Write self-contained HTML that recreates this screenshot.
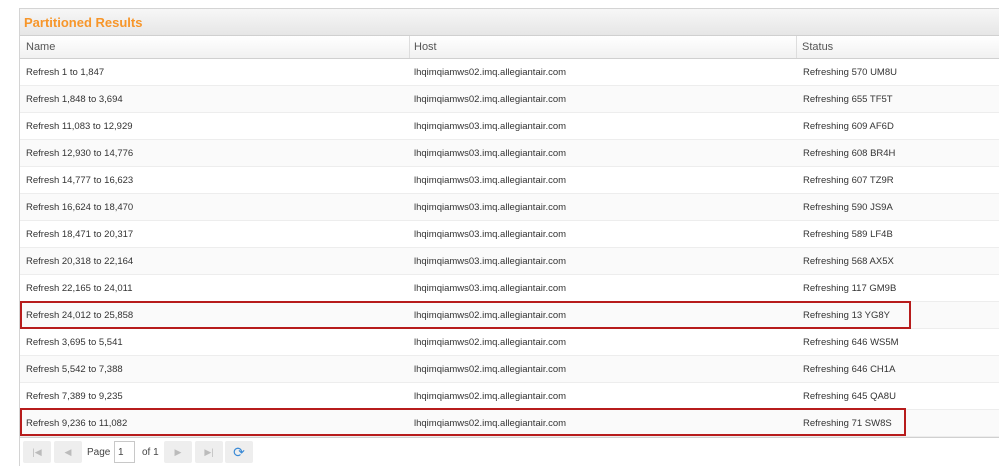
<!DOCTYPE html>
<html><head><style>
body{margin:0;width:999px;height:472px;background:#fff;font-family:"Liberation Sans",Arial,sans-serif;overflow:hidden;position:relative}
.panel{position:absolute;left:19px;top:8px;width:990px;height:458px;border:1px solid #d4d4d4;box-sizing:border-box;background:#fff}
.hd{height:27px;background:linear-gradient(#f7f7f7,#e6e6e6);border-bottom:1px solid #d0d0d0;box-sizing:border-box}
.hd span{position:absolute;left:4px;top:6px;font-weight:bold;font-size:13px;color:#f7962a}
.ch{position:absolute;top:27px;left:0;right:0;height:23px;background:linear-gradient(#fff,#f1f1f1);border-bottom:1px solid #d0d0d0;box-sizing:border-box;font-size:11px;color:#555}
.ch div{position:absolute;top:5px}
.sep{position:absolute;top:0;width:1px;height:22px;background:#ddd}
.row{position:absolute;left:0;right:0;height:27px;border-bottom:1px solid #ededed;box-sizing:border-box;font-size:9.5px;color:#333}
.row.a{background:#fafafa}
.row div{position:absolute;top:8px}
.red{position:absolute;border:2px solid #b71c1c;box-sizing:border-box}
.tb{position:absolute;top:428px;left:0;right:0;height:30px;border-top:1px solid #d0d0d0;background:#fff;font-size:10px;color:#444}
.btn{position:absolute;top:3px;width:28px;height:22px;background:#eee;border-radius:2px;color:#bbb;font-size:9px;text-align:center;line-height:22px}
</style></head><body>
<div class="panel">
<div class="hd"><span>Partitioned Results</span></div>
<div class="ch"><div style="left:6px">Name</div><div class="sep" style="left:389px;top:0"></div><div style="left:394px">Host</div><div class="sep" style="left:776px;top:0"></div><div style="left:782px">Status</div></div>
<div class="row" style="top:50px"><div style="left:6px">Refresh 1 to 1,847</div><div style="left:394px">lhqimqiamws02.imq.allegiantair.com</div><div style="left:783px">Refreshing 570 UM8U</div></div>
<div class="row a" style="top:77px"><div style="left:6px">Refresh 1,848 to 3,694</div><div style="left:394px">lhqimqiamws02.imq.allegiantair.com</div><div style="left:783px">Refreshing 655 TF5T</div></div>
<div class="row" style="top:104px"><div style="left:6px">Refresh 11,083 to 12,929</div><div style="left:394px">lhqimqiamws03.imq.allegiantair.com</div><div style="left:783px">Refreshing 609 AF6D</div></div>
<div class="row a" style="top:131px"><div style="left:6px">Refresh 12,930 to 14,776</div><div style="left:394px">lhqimqiamws03.imq.allegiantair.com</div><div style="left:783px">Refreshing 608 BR4H</div></div>
<div class="row" style="top:158px"><div style="left:6px">Refresh 14,777 to 16,623</div><div style="left:394px">lhqimqiamws03.imq.allegiantair.com</div><div style="left:783px">Refreshing 607 TZ9R</div></div>
<div class="row a" style="top:185px"><div style="left:6px">Refresh 16,624 to 18,470</div><div style="left:394px">lhqimqiamws03.imq.allegiantair.com</div><div style="left:783px">Refreshing 590 JS9A</div></div>
<div class="row" style="top:212px"><div style="left:6px">Refresh 18,471 to 20,317</div><div style="left:394px">lhqimqiamws03.imq.allegiantair.com</div><div style="left:783px">Refreshing 589 LF4B</div></div>
<div class="row a" style="top:239px"><div style="left:6px">Refresh 20,318 to 22,164</div><div style="left:394px">lhqimqiamws03.imq.allegiantair.com</div><div style="left:783px">Refreshing 568 AX5X</div></div>
<div class="row" style="top:266px"><div style="left:6px">Refresh 22,165 to 24,011</div><div style="left:394px">lhqimqiamws03.imq.allegiantair.com</div><div style="left:783px">Refreshing 117 GM9B</div></div>
<div class="row a" style="top:293px"><div style="left:6px">Refresh 24,012 to 25,858</div><div style="left:394px">lhqimqiamws02.imq.allegiantair.com</div><div style="left:783px">Refreshing 13 YG8Y</div></div>
<div class="row" style="top:320px"><div style="left:6px">Refresh 3,695 to 5,541</div><div style="left:394px">lhqimqiamws02.imq.allegiantair.com</div><div style="left:783px">Refreshing 646 WS5M</div></div>
<div class="row a" style="top:347px"><div style="left:6px">Refresh 5,542 to 7,388</div><div style="left:394px">lhqimqiamws02.imq.allegiantair.com</div><div style="left:783px">Refreshing 646 CH1A</div></div>
<div class="row" style="top:374px"><div style="left:6px">Refresh 7,389 to 9,235</div><div style="left:394px">lhqimqiamws02.imq.allegiantair.com</div><div style="left:783px">Refreshing 645 QA8U</div></div>
<div class="row a" style="top:401px"><div style="left:6px">Refresh 9,236 to 11,082</div><div style="left:394px">lhqimqiamws02.imq.allegiantair.com</div><div style="left:783px">Refreshing 71 SW8S</div></div>
<div class="tb">
<div class="btn" style="left:3px">|◀</div><div class="btn" style="left:34px">◀</div>
<div style="position:absolute;left:67px;top:9px">Page</div>
<div style="position:absolute;left:94px;top:3px;width:21px;height:22px;border:1px solid #c8c8c8;box-sizing:border-box;padding:5px 3px;font-size:10px">1</div>
<div style="position:absolute;left:122px;top:9px">of 1</div>
<div class="btn" style="left:144px">▶</div><div class="btn" style="left:175px">▶|</div>
<div class="btn" style="left:205px;color:#3a8ad6;font-size:14px">⟳</div>
</div>
</div>
<div class="red" style="left:20px;top:301px;width:891px;height:28px"></div>
<div class="red" style="left:20px;top:408px;width:886px;height:28px"></div>
</body></html>
